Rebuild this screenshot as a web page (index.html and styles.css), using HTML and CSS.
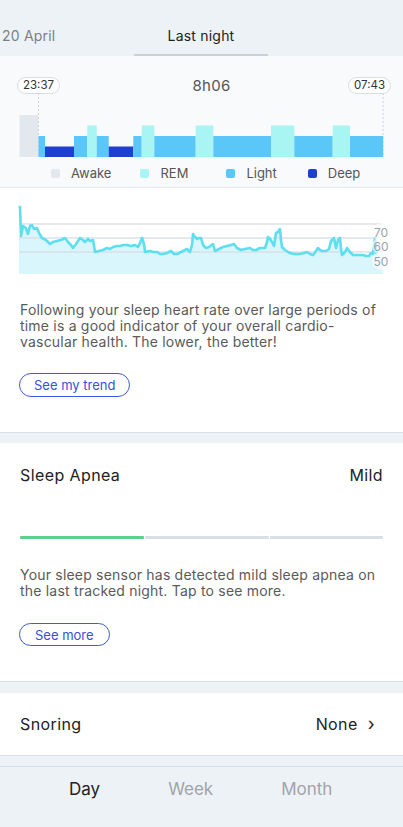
FILE: index.html
```html
<!DOCTYPE html>
<html lang="en">
<head>
<meta charset="utf-8">
<title>Sleep</title>
<link rel="stylesheet" href="styles.css">
</head>
<body>
<div class="screen">
  <header class="topbar">
    <div class="tab tab-prev">20 April</div>
    <div class="tab tab-active">Last night</div>
  </header>

  <section class="sleep">
    <div class="sleep-head">
      <span class="pill">23:37</span>
      <span class="duration">8h06</span>
      <span class="pill">07:43</span>
    </div>
    <svg class="hypno" viewBox="0 93 403 65" width="403" height="65">
      <line x1="38.5" y1="93" x2="38.5" y2="157" class="dots"/>
      <line x1="383" y1="93" x2="383" y2="157" class="dots"/>
      <rect x="19.5" y="115" width="18.8" height="42" class="awake"/>
      <rect x="38.5" y="136" width="6.5" height="21" class="light"/>
      <rect x="45" y="146.5" width="29" height="10.5" class="deep"/>
      <rect x="74" y="136" width="13.3" height="21" class="light"/>
      <rect x="87.3" y="125.5" width="9.4" height="31.5" class="rem"/>
      <rect x="96.7" y="136" width="12" height="21" class="light"/>
      <rect x="108.7" y="146.5" width="24.6" height="10.5" class="deep"/>
      <rect x="133.3" y="136" width="8.4" height="21" class="light"/>
      <rect x="141.7" y="125.5" width="12.6" height="31.5" class="rem"/>
      <rect x="154.3" y="136" width="41.4" height="21" class="light"/>
      <rect x="195.7" y="125.5" width="17.6" height="31.5" class="rem"/>
      <rect x="213.3" y="136" width="57.7" height="21" class="light"/>
      <rect x="271" y="125.5" width="23.3" height="31.5" class="rem"/>
      <rect x="294.3" y="136" width="38.4" height="21" class="light"/>
      <rect x="332.7" y="125.5" width="17.3" height="31.5" class="rem"/>
      <rect x="350" y="136" width="33.2" height="21" class="light"/>
    </svg>
    <ul class="legend">
      <li><i class="sw sw-awake"></i>Awake</li>
      <li><i class="sw sw-rem"></i>REM</li>
      <li><i class="sw sw-light"></i>Light</li>
      <li><i class="sw sw-deep"></i>Deep</li>
    </ul>
  </section>

  <section class="card hr">
    <svg class="hr-chart" viewBox="0 200 403 80" width="403" height="80">
      <polygon class="hr-fill" points="19,236 21,236 23,226 26,228 28,234 30,226 32,225 34,229 37,228 39,233 42,238 46,240 50,244 53,242 57,241 61,240 65,238 68,242 71,245 73,248 76,244 80,238 83,240 85,242 88,239 90,241 93,240 95,252 99,251 103,250 107,248 110,249 113,247 117,246 120,246 123,245 127,245 131,246 135,245 138,247 140,243 142,238 144,244 145,252 150,251 153,252 157,252 160,254 163,254 167,253 171,251 174,254 177,254 181,252 185,250 187,249 190,252 192,245 193,234 195,237 197,239 199,238 201,238 203,245 206,248 209,247 213,244 215,251 219,249 223,247 227,246 231,245 234,244 237,248 241,250 245,249 250,248 253,250 256,250 260,248 265,248 267,242 268,237 270,239 272,242 274,246 276,233 278,232 280,229 281,240 282,247 285,250 288,252 290,253 294,254 298,254 300,254 304,253 307,252 310,254 313,255 316,251 318,248 320,250 322,251 326,251 329,249 331,241 334,238 336,248 338,240 340,238 341,249 342,255 345,252 347,248 350,252 353,255 358,255 363,255 366,256 369,256 371,253 373,254 375,238 376,253 378,252 383,250 383,274 19,274"/>
      <line x1="19" y1="224" x2="383" y2="224" class="grid"/>
      <line x1="19" y1="238" x2="383" y2="238" class="grid"/>
      <line x1="19" y1="252" x2="383" y2="252" class="grid"/>
      <polyline class="hr-line" points="19,208 20,207 21,236 23,226 26,228 28,234 30,226 32,225 34,229 37,228 39,233 42,238 46,240 50,244 53,242 57,241 61,240 65,238 68,242 71,245 73,248 76,244 80,238 83,240 85,242 88,239 90,241 93,240 95,252 99,251 103,250 107,248 110,249 113,247 117,246 120,246 123,245 127,245 131,246 135,245 138,247 140,243 142,238 144,244 145,252 150,251 153,252 157,252 160,254 163,254 167,253 171,251 174,254 177,254 181,252 185,250 187,249 190,252 192,245 193,234 195,237 197,239 199,238 201,238 203,245 206,248 209,247 213,244 215,251 219,249 223,247 227,246 231,245 234,244 237,248 241,250 245,249 250,248 253,250 256,250 260,248 265,248 267,242 268,237 270,239 272,242 274,246 276,233 278,232 280,229 281,240 282,247 285,250 288,252 290,253 294,254 298,254 300,254 304,253 307,252 310,254 313,255 316,251 318,248 320,250 322,251 326,251 329,249 331,241 334,238 336,248 338,240 340,238 341,249 342,255 345,252 347,248 350,252 353,255 358,255 363,255 366,256 369,256 371,253 373,254 375,238 376,253 378,252"/>
      <circle cx="381" cy="232" r="9" class="lbl-bg"/>
      <circle cx="381" cy="246" r="9" class="lbl-bg"/>
      <circle cx="381" cy="261" r="9" class="lbl-bg"/>
      <text x="381" y="236.5" class="lbl">70</text>
      <text x="381" y="250.5" class="lbl">60</text>
      <text x="381" y="265.5" class="lbl">50</text>
    </svg>
    <p class="body-text">Following your sleep heart rate over large periods of time is a good indicator of your overall cardio-vascular health. The lower, the better!</p>
    <button class="outline-btn">See my trend</button>
  </section>

  <section class="card apnea">
    <div class="row-title">
      <span>Sleep Apnea</span>
      <span>Mild</span>
    </div>
    <div class="severity">
      <span class="seg seg-on"></span>
      <span class="seg"></span>
      <span class="seg"></span>
    </div>
    <p class="body-text">Your sleep sensor has detected mild sleep apnea on the last tracked night. Tap to see more.</p>
    <button class="outline-btn">See more</button>
  </section>

  <section class="card snoring">
    <span>Snoring</span>
    <span class="value">None <span class="chev">&#8250;</span></span>
  </section>

  <nav class="periods">
    <span class="period active">Day</span>
    <span class="period">Week</span>
    <span class="period">Month</span>
  </nav>
</div>
</body>
</html>
```
FILE: styles.css
```css
* { box-sizing: border-box; }
html, body { margin: 0; padding: 0; }
body {
  background: #edf2f7;
  font-family: "Inter", "Noto Sans", sans-serif;
  color: #222;
}
.screen { width: 403px; height: 827px; overflow: hidden; display: flex; flex-direction: column; }

.topbar {
  height: 56px;
  display: flex;
  align-items: flex-end;
  background: #edf2f7;
}
.tab {
  font-size: 14px;
  line-height: 18px;
  padding-bottom: 11px;
  letter-spacing: 0.2px;
}
.tab-prev { width: 134px; padding-left: 2px; color: #7b7f85; }
.tab-active {
  width: 134px;
  text-align: center;
  color: #222;
  border-bottom: 2px solid #c6d1dc;
  padding-bottom: 9px;
}

.sleep {
  background: #f9fafc;
  padding-top: 20px;
  padding-bottom: 7px;
  border-bottom: 1px solid #e6eaf0;
}
.sleep-head {
  display: grid;
  grid-template-columns: auto 1fr auto;
  align-items: center;
  padding: 0 12px 0 17px;
  height: 17px;
}
.pill {
  display: inline-block;
  height: 17px;
  line-height: 15px;
  padding: 0 5px;
  font-size: 11.5px;
  color: #333;
  background: #fff;
  border: 1px solid #d6dde5;
  border-radius: 9px;
}
.duration {
  text-align: center;
  padding-left: 15px;
  font-size: 15px;
  color: #555;
  letter-spacing: 0.3px;
}
.hypno { display: block; }
.dots { stroke: #c9d2dc; stroke-width: 1; stroke-dasharray: 2 2; }
.awake { fill: #e3e8ef; }
.light { fill: #5bc6f8; }
.rem { fill: #a8f5f4; }
.deep { fill: #1f3fd0; }

.legend {
  list-style: none;
  margin: 8px 0 0;
  padding: 0;
  display: flex;
  height: 14px;
  font-size: 13px;
  line-height: 14px;
  color: #555;
}
.legend li { display: flex; align-items: center; }
.legend li:nth-child(1) { margin-left: 51px; }
.legend li:nth-child(2) { margin-left: 29px; }
.legend li:nth-child(3) { margin-left: 38px; }
.legend li:nth-child(4) { margin-left: 31px; }
.sw { display: inline-block; width: 9px; height: 9px; border-radius: 2px; margin-right: 11px; }
.sw-awake { background: #e3e8ef; }
.sw-rem { background: #a8f5f4; }
.sw-light { background: #5bc6f8; }
.sw-deep { background: #1f3fd0; }

.card {
  background: #fff;
  border-bottom: 1px solid #d8e1ea;
}
.hr { padding: 12px 0 35px; margin-bottom: 10px; }
.hr-chart { display: block; }
.hr-fill { fill: #d8f6fb; }
.grid { stroke: #d7dee6; stroke-width: 1.3; opacity: 0.85; }
.hr-line { fill: none; stroke: #5ddff0; stroke-width: 2.6; stroke-linejoin: round; }
.lbl-bg { fill: #fff; opacity: 0.6; }
.lbl { font-size: 12px; fill: #98a3af; text-anchor: middle; font-family: "Inter", sans-serif; }

.body-text {
  margin: 22px 20px 0;
  font-size: 14px;
  line-height: 16px;
  color: #5a5a5a;
  letter-spacing: 0.2px;
}
.outline-btn {
  display: block;
  margin: 23px 0 0 19px;
  height: 24px;
  padding: 0 14px;
  background: #fff;
  border: 1.5px solid #4058e4;
  border-radius: 12px;
  color: #3650de;
  font-family: inherit;
  font-size: 13px;
}

.apnea { padding: 22px 20px 35px; margin-bottom: 11px; }
.row-title {
  display: flex;
  justify-content: space-between;
  font-size: 16px;
  line-height: 20px;
  color: #222;
  letter-spacing: 0.4px;
}
.severity {
  display: grid;
  grid-template-columns: 124px 124px 1fr;
  gap: 1px;
  margin-top: 51px;
  height: 3px;
}
.seg { background: #d8dfe6; border-radius: 1px; }
.seg-on { background: #5fcf8b; }
.apnea .body-text { margin: 28px 0 0; }
.apnea .outline-btn { margin: 24px 0 0 -1px; height: 23px; padding: 0 15px; }

.snoring {
  height: 63px;
  display: flex;
  align-items: center;
  justify-content: space-between;
  padding: 0 28px 0 20px;
  font-size: 16px;
  color: #222;
  letter-spacing: 0.4px;
}
.snoring .value { display: flex; align-items: center; }
.chev { margin-left: 10px; font-size: 18px; line-height: 1; }

.periods {
  margin-top: 10px;
  flex: 1;
  border-top: 1px solid #d6dee6;
  display: flex;
  gap: 68px;
  padding: 11px 0 0 69px;
  font-size: 17px;
  line-height: 22px;
}
.period { color: #a0a4a9; }
.period.active { color: #222; }
```
